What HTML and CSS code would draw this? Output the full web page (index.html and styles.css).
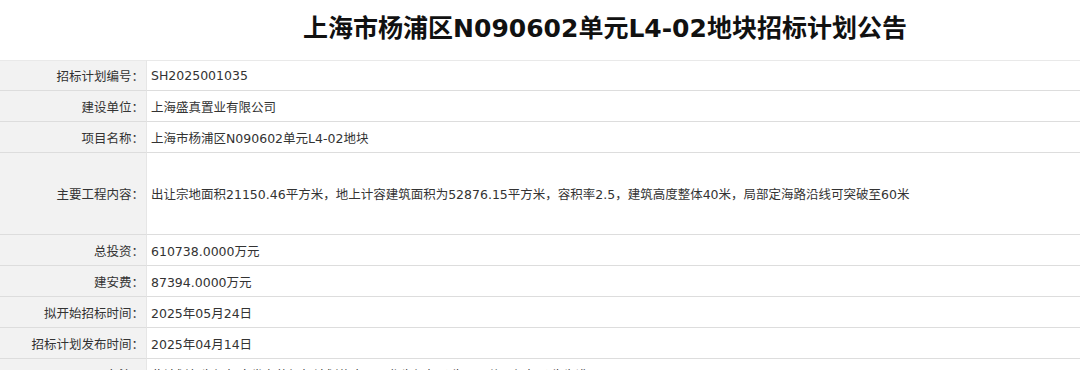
FILE: index.html
```html
<!DOCTYPE html>
<html lang="zh-CN">
<head>
<meta charset="utf-8">
<title>招标计划公告</title>
<link rel="stylesheet" href="styles.css">
</head>
<body>
<div class="page">
  <h1 class="title">上海市杨浦区N090602单元L4-02地块招标计划公告</h1>
  <table class="info">
    <tr><th>招标计划编号：</th><td>SH2025001035</td></tr>
    <tr><th>建设单位：</th><td>上海盛真置业有限公司</td></tr>
    <tr><th>项目名称：</th><td>上海市杨浦区N090602单元L4-02地块</td></tr>
    <tr class="tall"><th>主要工程内容：</th><td>出让宗地面积21150.46平方米，地上计容建筑面积为52876.15平方米，容积率2.5，建筑高度整体40米，局部定海路沿线可突破至60米</td></tr>
    <tr><th>总投资：</th><td>610738.0000万元</td></tr>
    <tr><th>建安费：</th><td>87394.0000万元</td></tr>
    <tr><th>拟开始招标时间：</th><td>2025年05月24日</td></tr>
    <tr><th>招标计划发布时间：</th><td>2025年04月14日</td></tr>
    <tr><th>备注：</th><td>此计划仅为招标人发布的招标计划信息，不作为招标公告，具体以招标公告为准</td></tr>
  </table>
</div>
</body>
</html>
```
FILE: styles.css
```css
html, body {
  margin: 0;
  padding: 0;
  background: #ffffff;
  overflow: hidden;
}
.page {
  width: 1210px;
  font-family: "DejaVu Sans", "Noto Sans CJK SC", sans-serif;
  color: #333333;
}
.title {
  margin: 0;
  height: 60px;
  line-height: 58px;
  text-align: center;
  font-size: 25px;
  font-weight: bold;
  color: #111111;
}
.info {
  width: 100%;
  border-collapse: separate;
  border-spacing: 0;
  font-size: 12.5px;
}
.info th, .info td {
  height: 29px;
  padding: 0;
  border-top: 1px solid #e9e9e9;
  border-bottom: 1px solid #dddddd;
  vertical-align: middle;
}
.info tr + tr th, .info tr + tr td {
  border-top: 0;
  height: 30px;
}
.info th {
  width: 144px;
  padding-right: 2px;
  text-align: right;
  font-weight: normal;
  background: #f2f2f2;
  border-right: 1px solid #e6e6e6;
}
.info td {
  padding-left: 4px;
  text-align: left;
}
.info tr.tall th, .info tr.tall td {
  height: 81px;
}
```
